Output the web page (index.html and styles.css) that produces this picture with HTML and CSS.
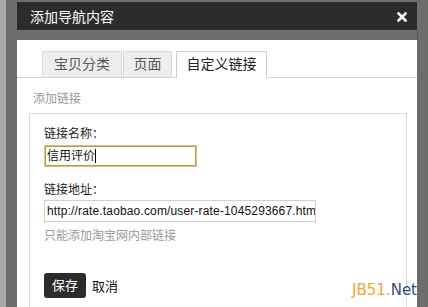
FILE: index.html
```html
<!DOCTYPE html>
<html lang="zh-CN">
<head>
<meta charset="utf-8">
<title>添加导航内容</title>
<link rel="stylesheet" href="styles.css">
</head>
<body>
<div class="frame">
  <div class="dialog">
    <div class="titlebar">
      <span class="title">添加导航内容</span>
      <span class="close"><svg width="10" height="10" viewBox="0 0 10 10"><path d="M1.5 1.5 L8.5 8.5 M8.5 1.5 L1.5 8.5" stroke="#fff" stroke-width="2.6" stroke-linecap="square"/></svg></span>
    </div>
    <div class="sep"></div>
    <div class="body">
      <div class="tabs">
        <div class="tab tab-cat">宝贝分类</div>
        <div class="tab tab-page">页面</div>
        <div class="tab tab-link active">自定义链接</div>
      </div>
      <div class="section-title">添加链接</div>
      <div class="panel">
        <div class="label">链接名称：</div>
        <div class="field focused">信用评价<span class="caret"></span></div>
        <div class="label label2">链接地址：</div>
        <div class="field wide">http://rate.taobao.com/user-rate-1045293667.htm</div>
        <div class="hint">只能添加淘宝网内部链接</div>
        <div class="actions">
          <span class="btn-save">保存</span>
          <span class="btn-cancel">取消</span>
        </div>
      </div>
    </div>
  </div>
</div>
<div class="watermark"><span class="wm-a">JB51.</span><span class="wm-b">Net</span></div>
</body>
</html>
```
FILE: styles.css
```css
html, body {
  margin: 0;
  padding: 0;
  height: 307px;
  overflow: hidden;
}
body {
  background: #a9a9a9;
  font-family: "Liberation Sans", "Noto Sans CJK SC", sans-serif;
  font-size: 12px;
  color: #222;
  position: relative;
}
.frame {
  margin-left: 6px;
  height: 307px;
  background: #6d6d6d;
  padding: 2px 0 0 11px;
  box-sizing: border-box;
}
.dialog {
  width: 400px;
}
.titlebar {
  height: 28px;
  background: #2c2c2c;
  display: flex;
  align-items: center;
  justify-content: space-between;
  padding: 0 10px 0 13px;
  color: #fff;
}
.title {
  font-size: 14px;
}
.close {
  display: flex;
  width: 10px;
  height: 10px;
  margin-top: 1px;
}
.sep {
  height: 10px;
  border-right: 1px solid #555;
  margin-right: -1px;
}
.body {
  background: #fff;
  height: 267px;
  padding-top: 10px;
  box-sizing: border-box;
}
.tabs {
  display: flex;
  align-items: flex-end;
  padding-left: 25px;
  border-bottom: 1px solid #d4d4d4;
  height: 27px;
}
.tab {
  height: 26px;
  box-sizing: border-box;
  border: 1px solid #d8d8d8;
  border-bottom: none;
  background: #eeeeee;
  color: #555;
  font-size: 14px;
  line-height: 25px;
  padding: 0;
  text-align: center;
  white-space: nowrap;
  margin-right: 1px;
}
.tab-cat {
  width: 80px;
}
.tab-page {
  width: 49px;
  margin-right: 4px;
}
.tab-link {
  width: 91px;
}
.tab.active {
  background: #fff;
  color: #222;
  border-color: #cfcfcf;
  height: 27px;
  margin-bottom: -1px;
}
.section-title {
  color: #9a9a9a;
  font-size: 12px;
  line-height: 18px;
  margin: 12px 0 0 16px;
}
.panel {
  margin: 5px 10px 0 12px;
  border: 1px solid #dcdcdc;
  border-bottom: none;
  height: 194px;
  box-sizing: border-box;
  padding: 11px 0 0 14px;
}
.label {
  line-height: 18px;
  color: #222;
}
.label2 {
  margin-top: 14px;
}
.field {
  box-sizing: border-box;
  height: 21px;
  line-height: 19px;
  border: 1px solid #cfcfcf;
  padding: 0 2px;
  white-space: nowrap;
  overflow: hidden;
  color: #111;
}
.field.focused {
  margin-top: 2px;
  width: 153px;
  height: 22px;
  border: 2px solid #d9c27a;
  outline: 1px solid #b49a4a;
  outline-offset: -2px;
  padding: 0 1px;
  line-height: 18px;
}
.caret {
  display: inline-block;
  width: 1px;
  height: 14px;
  background: #000;
  vertical-align: -3px;
}
.field.wide {
  margin-top: 1px;
  width: 272px;
  height: 22px;
  line-height: 20px;
  letter-spacing: 0.15px;
}
.hint {
  color: #9a9a9a;
  line-height: 18px;
  margin-top: 5px;
}
.actions {
  margin-top: 28px;
  display: flex;
  align-items: center;
  gap: 6px;
}
.btn-save {
  display: inline-block;
  width: 42px;
  height: 25px;
  line-height: 25px;
  text-align: center;
  background: #2c2c2c;
  color: #fff;
  border-radius: 3px;
  font-size: 13px;
}
.btn-cancel {
  font-size: 13px;
  color: #111;
}
.watermark {
  position: absolute;
  right: 11px;
  bottom: 8px;
  font-size: 15px;
  font-family: "DejaVu Sans", sans-serif;
}
.wm-a { color: #f2a33a; }
.wm-b { color: #2f4f80; }
```
